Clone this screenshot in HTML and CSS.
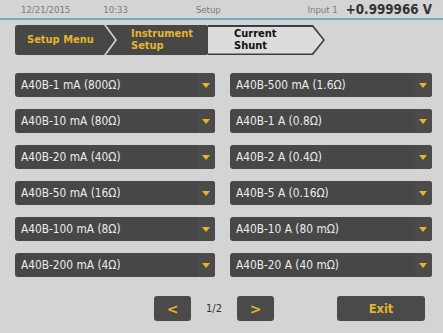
FILE: index.html
```html
<!DOCTYPE html>
<html lang="en">
<head>
  <meta charset="UTF-8" />
  <title>Setup – Current Shunt</title>
  <link rel="stylesheet" href="styles.css">
</head>
<body>
  <div class="screen">
    <header class="status">
      <span class="date">12/21/2015</span>
      <span class="time">10:33</span>
      <span class="title">Setup</span>
      <span class="input">Input 1</span>
      <span class="reading">+0.999966 V</span>
    </header>

    <nav class="crumbs">
      <div class="crumb first">Setup Menu</div>
      <div class="crumb mid">Instrument<br>Setup</div>
      <div class="crumb last"><div class="inner">Current<br>Shunt</div></div>
    </nav>

    <div class="shunts">
      <div class="select"><span class="label">A40B-1 mA (800Ω)</span><span class="arrow"></span></div>
      <div class="select"><span class="label">A40B-500 mA (1.6Ω)</span><span class="arrow"></span></div>
      <div class="select"><span class="label">A40B-10 mA (80Ω)</span><span class="arrow"></span></div>
      <div class="select"><span class="label">A40B-1 A (0.8Ω)</span><span class="arrow"></span></div>
      <div class="select"><span class="label">A40B-20 mA (40Ω)</span><span class="arrow"></span></div>
      <div class="select"><span class="label">A40B-2 A (0.4Ω)</span><span class="arrow"></span></div>
      <div class="select"><span class="label">A40B-50 mA (16Ω)</span><span class="arrow"></span></div>
      <div class="select"><span class="label">A40B-5 A (0.16Ω)</span><span class="arrow"></span></div>
      <div class="select"><span class="label">A40B-100 mA (8Ω)</span><span class="arrow"></span></div>
      <div class="select"><span class="label">A40B-10 A (80 mΩ)</span><span class="arrow"></span></div>
      <div class="select"><span class="label">A40B-200 mA (4Ω)</span><span class="arrow"></span></div>
      <div class="select"><span class="label">A40B-20 A (40 mΩ)</span><span class="arrow"></span></div>
    </div>

    <footer class="pager">
      <button class="btn nav">&lt;</button>
      <span class="page">1/2</span>
      <button class="btn nav">&gt;</button>
      <button class="btn exit">Exit</button>
    </footer>
  </div>
</body>
</html>
```

FILE: styles.css
```css
body {
  margin: 0;
  background: #d4d4d4;
  font-family: "DejaVu Sans Condensed", "DejaVu Sans", sans-serif;
}
.screen {
  width: 443px;
  height: 333px;
  overflow: hidden;
}

/* status bar */
.status {
  display: flex;
  align-items: center;
  height: 18px;
  padding: 0 11px 0 21px;
  border-bottom: 2px solid #6eaecb;
  font-size: 9.5px;
  color: #7a7a7a;
}
.status .time { margin-left: 33px; }
.status .title { margin-left: 68px; }
.status .input { margin-left: auto; }
.status .reading {
  margin-left: 8px;
  font-size: 13.3px;
  font-weight: bold;
  color: #333;
}

/* breadcrumb */
.crumbs {
  display: flex;
  height: 30px;
  margin: 5px 0 0 15px;
  font-size: 11px;
  font-weight: bold;
  line-height: 12.5px;
}
.crumb {
  display: flex;
  align-items: center;
  background: #474747;
  color: #e6b52a;
}
.crumb.first {
  width: 100px;
  padding-left: 12px;
  box-sizing: border-box;
  border-radius: 3px 0 0 3px;
  clip-path: polygon(0 0, 89px 0, 100px 50%, 89px 100%, 0 100%);
}
.crumb.mid {
  width: 112px;
  margin-left: -9px;
  padding-left: 25px;
  box-sizing: border-box;
  clip-path: polygon(0 0, 101px 0, 112px 50%, 101px 100%, 0 100%, 11px 50%);
}
.crumb.last {
  width: 117px;
  margin-left: -10px;
  background: #3c3c3c;
  clip-path: polygon(0 0, 105px 0, 117px 50%, 105px 100%, 0 100%);
}
.crumb.last .inner {
  flex: 1;
  align-self: stretch;
  display: flex;
  align-items: center;
  margin: 1.5px 0;
  padding-left: 26px;
  background: #dcdcdc;
  color: #111;
  clip-path: polygon(0 0, 104px 0, 115px 50%, 104px 100%, 0 100%);
}

/* shunt list */
.shunts {
  display: grid;
  grid-template-columns: 200px 202px;
  column-gap: 15px;
  row-gap: 12px;
  margin: 18px 0 0 15px;
}
.select {
  display: flex;
  align-items: center;
  height: 24px;
  background: #474747;
  border-radius: 3px;
  color: #ededed;
  font-size: 11.8px;
}
.select .label {
  flex: 1;
  padding-left: 6px;
}
.select .arrow {
  position: relative;
  width: 17px;
  height: 24px;
  background: #4b4b4b;
  border-radius: 0 3px 3px 0;
}
.select .arrow::after {
  content: "";
  position: absolute;
  left: 4px;
  top: 10px;
  border-left: 4.5px solid transparent;
  border-right: 4.5px solid transparent;
  border-top: 5px solid #efb126;
}

/* pager */
.pager {
  display: flex;
  align-items: center;
  margin: 19px 18px 0 154px;
}
.btn {
  height: 25px;
  border: none;
  border-radius: 3px;
  background: #4a4a4a;
  color: #e6b52a;
  font-family: "DejaVu Sans", sans-serif;
  font-weight: bold;
  padding: 0;
}
.btn.nav {
  width: 37px;
  font-size: 14px;
}
.page {
  width: 46px;
  text-align: center;
  font-size: 11px;
  color: #333;
}
.btn.exit {
  width: 88px;
  margin-left: auto;
  font-size: 11.5px;
}
```
